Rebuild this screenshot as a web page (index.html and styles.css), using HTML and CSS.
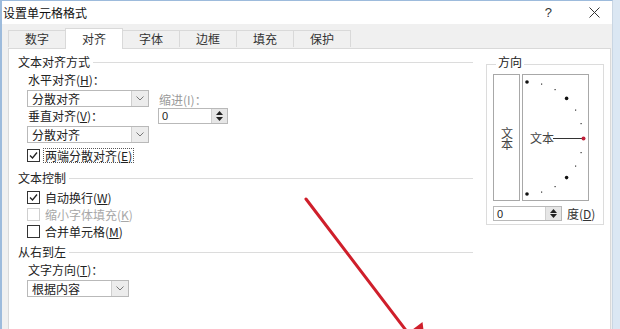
FILE: index.html
```html
<!DOCTYPE html>
<html lang="zh">
<head>
<meta charset="utf-8">
<title>设置单元格格式</title>
<link rel="stylesheet" href="styles.css">
</head>
<body>
<div class="window">
  <div class="titlebar">
    <span class="title">设置单元格格式</span>
    <span class="help">?</span>
    <svg class="close" width="11" height="11" viewBox="0 0 11 11"><path d="M0.5 0.5L10.5 10.5M10.5 0.5L0.5 10.5" stroke="#333" stroke-width="1" fill="none"/></svg>
  </div>
  <div class="client">
    <div class="tabs">
      <div class="tab">数字</div>
      <div class="tab active">对齐</div>
      <div class="tab">字体</div>
      <div class="tab">边框</div>
      <div class="tab">填充</div>
      <div class="tab">保护</div>
    </div>
    <div class="panel">
      <div class="left">
        <div class="group-title"><span>文本对齐方式</span></div>
        <div class="align-grid">
          <div class="lbl h-lbl">水平对齐(<u>H</u>)：</div>
          <div class="combo h-combo"><span class="combo-text">分散对齐</span><span class="drop"><svg width="8" height="5" viewBox="0 0 8 5"><path d="M0.5 0.5L4 4L7.5 0.5" stroke="#777" fill="none"/></svg></span></div>
          <div class="lbl indent-lbl">缩进(I)：</div>
          <div class="lbl v-lbl">垂直对齐(<u>V</u>)：</div>
          <div class="spin indent-spin"><span class="spin-text">0</span><span class="spin-btns"><svg width="7" height="4" viewBox="0 0 7 4"><path d="M0 4L3.5 0L7 4Z" fill="#222"/></svg><svg width="7" height="4" viewBox="0 0 7 4"><path d="M0 0L3.5 4L7 0Z" fill="#222"/></svg></span></div>
          <div class="combo v-combo"><span class="combo-text">分散对齐</span><span class="drop"><svg width="8" height="5" viewBox="0 0 8 5"><path d="M0.5 0.5L4 4L7.5 0.5" stroke="#777" fill="none"/></svg></span></div>
          <div class="check justify">
            <span class="box"><svg width="11" height="11" viewBox="0 0 11 11"><path d="M2 5.5L4.5 8L9 2.5" stroke="#222" stroke-width="1.3" fill="none"/></svg></span>
            <span class="check-lbl focus">两端分散对齐(<u>E</u>)</span>
          </div>
        </div>
        <div class="group-title gt2"><span>文本控制</span></div>
        <div class="checks">
          <div class="check">
            <span class="box"><svg width="11" height="11" viewBox="0 0 11 11"><path d="M2 5.5L4.5 8L9 2.5" stroke="#222" stroke-width="1.3" fill="none"/></svg></span>
            <span class="check-lbl">自动换行(<u>W</u>)</span>
          </div>
          <div class="check disabled">
            <span class="box"></span>
            <span class="check-lbl">缩小字体填充(<u>K</u>)</span>
          </div>
          <div class="check">
            <span class="box"></span>
            <span class="check-lbl">合并单元格(<u>M</u>)</span>
          </div>
        </div>
        <div class="group-title gt3"><span>从右到左</span></div>
        <div class="rtl">
          <div class="lbl">文字方向(<u>T</u>)：</div>
          <div class="combo dir-combo"><span class="combo-text">根据内容</span><span class="drop"><svg width="8" height="5" viewBox="0 0 8 5"><path d="M0.5 0.5L4 4L7.5 0.5" stroke="#777" fill="none"/></svg></span></div>
        </div>
      </div>
      <div class="orient">
        <div class="orient-title">方向</div>
        <div class="orient-boxes">
          <div class="vbox"><span class="vtext">文本</span></div>
          <div class="rbox">
            <svg width="65" height="125" viewBox="0 0 65 125">
              <g fill="#111">
                <circle cx="4" cy="7" r="1.8"/>
                <circle cx="43.6" cy="23.4" r="1.8"/>
                <circle cx="43.6" cy="102.6" r="1.8"/>
                <circle cx="4" cy="119" r="1.8"/>
              </g>
              <g fill="#333">
                <rect x="18" y="8.5" width="1.2" height="1.2"/>
                <rect x="31.5" y="14" width="1.2" height="1.2"/>
                <rect x="52" y="34.5" width="1.2" height="1.2"/>
                <rect x="57.5" y="48" width="1.2" height="1.2"/>
                <rect x="57.5" y="77" width="1.2" height="1.2"/>
                <rect x="52" y="90.5" width="1.2" height="1.2"/>
                <rect x="31.5" y="111" width="1.2" height="1.2"/>
                <rect x="18" y="116.5" width="1.2" height="1.2"/>
              </g>
              <text x="7" y="67.5" class="rtext">文本</text>
              <path d="M30 63.5H59" stroke="#333" stroke-width="1"/>
              <circle cx="60.5" cy="63.5" r="2" fill="#c0203a"/>
            </svg>
          </div>
        </div>
        <div class="deg-row">
          <div class="spin deg-spin"><span class="spin-text">0</span><span class="spin-btns"><svg width="7" height="4" viewBox="0 0 7 4"><path d="M0 4L3.5 0L7 4Z" fill="#222"/></svg><svg width="7" height="4" viewBox="0 0 7 4"><path d="M0 0L3.5 4L7 0Z" fill="#222"/></svg></span></div>
          <span class="deg-lbl">度(<u>D</u>)</span>
        </div>
      </div>
    </div>
  </div>
  <svg class="arrow" width="620" height="329" viewBox="0 0 620 329">
    <path d="M306 199L408 333" stroke="#cf1f2b" stroke-width="3" stroke-linecap="round" fill="none"/>
    <path d="M422.5 322L426 350L393.5 344Z" fill="#cf1f2b"/>
  </svg>
</div>
</body>
</html>
```
FILE: styles.css
```css
* { box-sizing: border-box; }
html, body { margin: 0; padding: 0; }
body {
  width: 620px;
  height: 329px;
  overflow: hidden;
  background: #dbe7f3;
  font-family: "Noto Sans CJK SC", "Noto Sans", sans-serif;
  font-size: 12px;
  color: #222;
}
u { text-decoration: underline; }
.window {
  position: relative;
  width: 613px;
  height: 329px;
  background: #f0f0f0;
  border-left: 2px solid #9dbbdc;
  border-top: 1px solid #9dbbdc;
  border-right: 1px solid #c9d6e3;
  display: flex;
  flex-direction: column;
}
.titlebar {
  height: 23px;
  background: #fff;
  display: flex;
  align-items: center;
  padding-left: 1px;
}
.title {
  font-size: 12px;
  line-height: 16px;
  color: #111;
  flex: 1;
}
.help {
  font-family: "Liberation Sans", sans-serif;
  font-size: 13px;
  color: #333;
  margin-right: 37px;
}
.close { margin-right: 12px; }
.client {
  flex: 1;
  padding-left: 6px;
  padding-right: 1px;
  display: flex;
  flex-direction: column;
}
.tabs {
  display: flex;
  height: 24px;
  align-items: flex-end;
  position: relative;
  z-index: 1;
}
.tab {
  width: 58px;
  height: 17px;
  margin-bottom: 1px;
  border: 1px solid #d9d9d9;
  border-bottom: none;
  margin-right: -1px;
  background: #f0f0f0;
  text-align: center;
  line-height: 16px;
  color: #333;
}
.tab.active {
  height: 21px;
  margin-bottom: -1px;
  background: #fff;
  line-height: 20px;
  position: relative;
  z-index: 2;
}
.panel {
  flex: 1;
  background: #fff;
  border: 1px solid #d9d9d9;
  border-bottom: none;
  padding: 6px 7px 0 9px;
  display: grid;
  grid-template-columns: 455px 118px;
  column-gap: 13px;
  align-items: start;
}
.group-title {
  display: flex;
  align-items: center;
  gap: 3px;
  line-height: 14px;
  height: 14px;
  color: #222;
}
.group-title::after {
  content: "";
  flex: 1;
  height: 1px;
  background: #dcdcdc;
}
.gt2 { margin-top: 5px; }
.gt3 { margin-top: 5px; }
.align-grid {
  margin-top: 3px;
  padding-left: 9px;
  display: grid;
  grid-template-columns: 122px 70px;
  column-gap: 9px;
  grid-template-rows: 18px 18px 18px 18px 22px;
}
.lbl {
  line-height: 16px;
  color: #222;
  padding-left: 1px;
}
.h-lbl { grid-column: 1; grid-row: 1; align-self: start; }
.h-combo { grid-column: 1; grid-row: 2; }
.indent-lbl { grid-column: 2; grid-row: 2; align-self: end; color: #9a9a9a; line-height: 14px; margin-bottom: 1px; }
.v-lbl { grid-column: 1; grid-row: 3; align-self: start; }
.indent-spin { grid-column: 2; grid-row: 3; }
.v-combo { grid-column: 1; grid-row: 4; }
.justify { grid-column: 1 / 3; grid-row: 5; align-self: center; margin-left: 0 !important; }
.combo {
  height: 17px;
  border: 1px solid #b9b9b9;
  background: #fff;
  display: flex;
  align-items: stretch;
}
.combo-text {
  flex: 1;
  padding-left: 4px;
  line-height: 15px;
  color: #222;
}
.drop {
  width: 17px;
  background: #ececec;
  border-left: 1px solid #cfcfcf;
  display: flex;
  align-items: center;
  justify-content: center;
}
.spin {
  height: 16px;
  border: 1px solid #b9b9b9;
  background: #fff;
  display: flex;
}
.spin-text {
  flex: 1;
  padding-left: 3px;
  line-height: 14px;
  font-family: "Liberation Sans", sans-serif;
  font-size: 11px;
}
.spin-btns {
  width: 16px;
  background: #e6e6e6;
  border-left: 1px solid #cfcfcf;
  display: flex;
  flex-direction: column;
  align-items: center;
  justify-content: space-around;
  padding: 1px 0;
}
.check {
  display: flex;
  align-items: center;
  height: 17px;
  margin-left: 9px;
}
.box {
  width: 13px;
  height: 13px;
  border: 1px solid #333;
  background: #fff;
  display: flex;
  align-items: center;
  justify-content: center;
  flex: none;
}
.check-lbl {
  margin-left: 3px;
  line-height: 13px;
  padding: 0 1px;
  border: 1px solid transparent;
}
.check-lbl.focus { border: 1px dotted #555; }
.disabled .box { border-color: #cfcfcf; }
.disabled .check-lbl { color: #a8a8a8; }
.checks { margin-top: 4px; }
.rtl { padding-left: 9px; margin-top: 3px; }
.dir-combo { width: 102px; margin-top: 2px; }
.orient {
  margin-top: 9px;
  border: 1px solid #dcdcdc;
  padding: 0 6px 3px 6px;
}
.orient-title {
  margin: -10px 0 5px 3px;
  background: #fff;
  width: fit-content;
  padding: 0 2px;
  line-height: 14px;
  color: #222;
}
.orient-boxes {
  display: flex;
  gap: 2px;
  height: 127px;
}
.vbox {
  width: 27px;
  border: 1px solid #a8a8a8;
  display: flex;
  align-items: center;
  justify-content: center;
  color: #444;
}
.vtext {
  writing-mode: vertical-rl;
  line-height: 14px;
  letter-spacing: -1px;
}
.rbox {
  width: 67px;
  border: 1px solid #a8a8a8;
}
.rbox svg { display: block; }
.rtext {
  font-family: "Noto Sans CJK SC", sans-serif;
  font-size: 12px;
  fill: #444;
}
.deg-row {
  display: flex;
  align-items: center;
  margin-top: 5px;
  white-space: nowrap;
}
.deg-spin { width: 69px; height: 15px; flex: none; }
.deg-lbl { margin-left: 5px; line-height: 14px; color: #333; white-space: nowrap; }
.arrow {
  position: absolute;
  left: -2px;
  top: -1px;
  pointer-events: none;
}
```
